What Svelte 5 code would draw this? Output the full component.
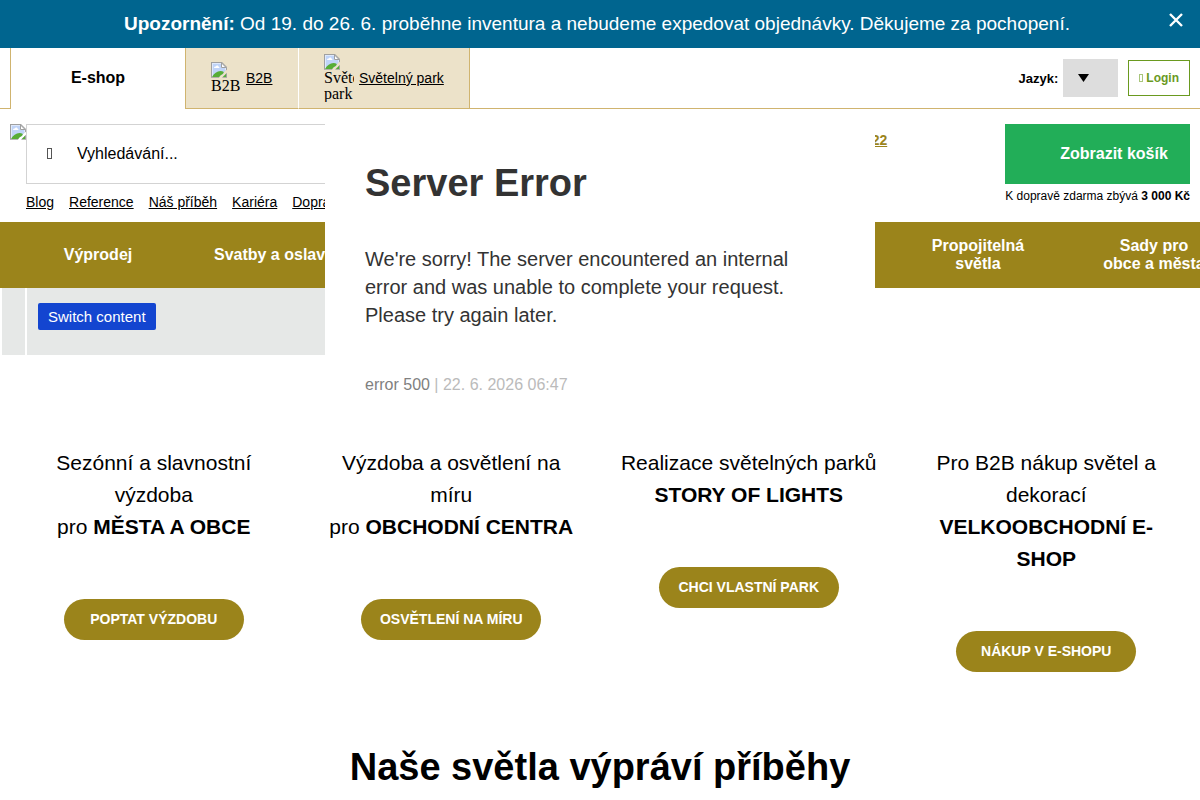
<script>
    // Top tabs with their own logo (shown as a missing picture with alt text)
    const partnerTabs = [
        { label: 'B2B', alt: 'B2B' },
        { label: 'Světelný park', alt: 'Světelný park' }
    ];

    const infoLinks = ['Blog', 'Reference', 'Náš příběh', 'Kariéra', 'Doprava a platba'];

    // \u00a0 keeps "obce a města" on one line
    const categories = [
        'Výprodej',
        'Svatby a oslavy',
        'Vánoční osvětlení',
        'Světelné řetězy',
        'Světelné dekorace',
        'Propojitelná světla',
        'Sady pro obce\u00a0a\u00a0města'
    ];

    const services = [
        { text: 'Sezónní a slavnostní výzdoba', prefix: 'pro ', strong: 'MĚSTA A OBCE', button: 'POPTAT VÝZDOBU' },
        { text: 'Výzdoba a osvětlení na míru', prefix: 'pro ', strong: 'OBCHODNÍ CENTRA', button: 'OSVĚTLENÍ NA MÍRU' },
        { text: 'Realizace světelných parků', prefix: '', strong: 'STORY OF LIGHTS', button: 'CHCI VLASTNÍ PARK' },
        { text: 'Pro B2B nákup světel a dekorací', prefix: '', strong: 'VELKOOBCHODNÍ E-SHOP', button: 'NÁKUP V E-SHOPU' }
    ];

    let noticeOpen = $state(true);
</script>

<!-- Missing picture icon, torn at the lower right corner -->
{#snippet brokenImage()}
    <svg class="broken" width="16" height="16" viewBox="0 0 16 16" aria-hidden="true">
        <g class="torn">
            <path d="M0 0H11L16 5V16H0Z" fill="#a0a0a0" />
            <path d="M1 1H10.5L15 5.5V15H1Z" fill="#dfe9fb" />
            <path d="M2 2H10V6H14V14H2Z" fill="#c0d4f8" />
            <path d="M3 6c0-1.2 1-1.8 1.8-1.5C5.2 3 7.5 3.2 7.6 4.8 8.6 4.8 8.8 6 8 6Z" fill="#fff" />
            <path d="M1 15C3 11.5 6 9 9.5 9 12 9 14 10.500 15 12V15Z" fill="#57ad36" />
            <path d="M10.5 1V5.5H15Z" fill="#fff" stroke="#a0a0a0" />
        </g>
    </svg>
{/snippet}

<div class="page">
    {#if noticeOpen}
        <div class="notice">
            <p><strong>Upozornění:</strong> Od 19. do 26. 6. proběhne inventura a nebudeme expedovat objednávky. Děkujeme za pochopení.</p>
            <button class="close" aria-label="Zavřít" onclick={() => (noticeOpen = false)}>
                <svg width="14" height="14" viewBox="0 0 14 14">
                    <path d="M1 1 13 13M13 1 1 13" stroke="#fff" stroke-width="2.4" />
                </svg>
            </button>
        </div>
    {/if}

    <!-- ===== TOP BAR ===== -->
    <div class="topbar">
        <div class="tabs">
            <strong class="tab-active">E-shop</strong>
            {#each partnerTabs as tab}
                <a href="#top" class="tab">
                    <span class="tab-logo">{@render brokenImage()}<span>{tab.alt}</span></span>
                    <span class="tab-label">{tab.label}</span>
                </a>
            {/each}
        </div>
        <div class="user">
            <label for="lang">Jazyk:</label>
            <div class="lang">
                <select id="lang"><option></option></select>
                <svg width="11" height="8" viewBox="0 0 11 8" aria-hidden="true"><path d="M0 0H11L5.5 8Z" /></svg>
            </div>
            <a href="#login" class="login"><span class="glyph small"></span>Login</a>
        </div>
    </div>

    <!-- ===== HEADER ===== -->
    <div class="below">
        <header class="header">
            <a href="#home" class="logo" aria-label="Domů">{@render brokenImage()}</a>
            <div class="header-main">
                <form class="search">
                    <span class="glyph"></span>
                    <input type="text" placeholder="Vyhledávání..." aria-label="Vyhledávání" />
                </form>
                <div class="info-links">
                    {#each infoLinks as link}
                        <a href="#info">{link}</a>
                    {/each}
                </div>
            </div>
            <a href="#phone" class="phone">777 722 722</a>
            <div class="cart">
                <a href="#cart" class="cart-button">Zobrazit košík</a>
                <p>K dopravě zdarma zbývá <strong>3 000 Kč</strong></p>
            </div>
        </header>

        <nav class="categories">
            {#each categories as category}
                <a href="#category"><span>{category}</span></a>
            {/each}
        </nav>

        <div class="slider">
            <div class="slider-edge"></div>
            <div class="slider-body">
                <button>Switch content</button>
            </div>
        </div>

        <!-- Server error box lies over the header -->
        <div class="error-box">
            <h1>Server Error</h1>
            <p>We're sorry! The server encountered an internal error and was unable to complete your request. Please try again later.</p>
            <p class="error-info"><span>error 500</span> | 22. 6. 2026 06:47</p>
        </div>
    </div>

    <!-- ===== SERVICES ===== -->
    <section class="services">
        {#each services as service}
            <div class="service">
                <p>{service.text}<br />{service.prefix}<strong>{service.strong}</strong></p>
                <a href="#service">{service.button}</a>
            </div>
        {/each}
    </section>

    <h2>Naše světla výpráví příběhy</h2>
</div>

<style>
    :global(body) {
        margin: 0;
        background: #fff;
    }

    .page {
        font-family: "Liberation Sans", Arial, sans-serif;
        font-size: 16px;
        color: #000;
        overflow: hidden;
    }

    .page :global(*) { box-sizing: border-box; }

    p, h1, h2 { margin: 0; }
    a { color: inherit; }

    /* ===== NOTICE ===== */
    .notice {
        display: flex;
        align-items: flex-start;
        background: #00658f;
        color: #fff;
    }

    .notice p {
        flex: 1;
        padding: 12px 0 12px 35px;
        font-size: 19px;
        line-height: 24px;
        text-align: center;
    }

    .close {
        padding: 13px 17px 13px 10px;
        border: 0;
        background: none;
        line-height: 0;
        cursor: pointer;
    }

    /* ===== TOP BAR ===== */
    .topbar {
        display: flex;
        justify-content: space-between;
        height: 61px;
        border-bottom: 1px solid #d0b46f;
        padding: 0 10px;
    }

    .tabs {
        display: flex;
        margin-bottom: -1px;
    }

    .tab-active {
        width: 175px;
        border-left: 1px solid #d0b46f;
        background: #fff;
        line-height: 60px;
        text-align: center;
    }

    .tab {
        display: flex;
        align-items: center;
        gap: 5px;
        min-width: 114px;
        padding: 0 25px;
        border: 1px solid #d0b46f;
        border-top: 0;
        background: #ece2c9;
        font-size: 14px;
    }

    .tab:nth-child(2) { border-right-color: #fff; }
    .tab:last-child { border-left: 0; }

    .tab-logo {
        display: block;
        width: 30px;
        overflow: hidden;
        font-family: "Liberation Serif", serif;
        font-size: 16px;
        line-height: 16px;
    }

    .tab-logo span { display: block; }
    .tab-label { text-decoration: underline; }
    .tab, .login { text-decoration: none; }

    .broken { display: block; }

    .torn {
        clip-path: polygon(0 0, 16px 0, 16px 8px, 13px 10px, 12px 12px, 9px 14px, 8px 16px, 11px 16px, 13px 14px, 16px 11px, 16px 16px, 0 16px);
    }

    /* Empty box that stands in for an icon font glyph */
    .glyph {
        width: 5px;
        height: 11px;
        margin: 0 25px 2px 20px;
        border: 1px solid #555;
    }

    .glyph.small {
        display: inline-block;
        width: 4px;
        height: 8px;
        margin: 0 3px 0 0;
        border-color: #a9c67c;
    }

    .user {
        display: flex;
        align-items: center;
    }

    .user label {
        margin-right: 5px;
        font-size: 13px;
        font-weight: bold;
    }

    .lang {
        position: relative;
        margin-right: 10px;
    }

    .lang select {
        display: block;
        width: 55px;
        height: 38px;
        border: 0;
        background: #ddd;
        appearance: none;
    }

    .lang svg {
        position: absolute;
        top: 15px;
        left: 15px;
        pointer-events: none;
    }

    .login {
        padding: 0 10px;
        border: 1px solid #6a9a1f;
        color: #6a9a1f;
        font-size: 12px;
        font-weight: bold;
        line-height: 34px;
    }

    /* ===== HEADER ===== */
    .below { position: relative; }

    .header {
        display: flex;
        padding: 15px 10px 0;
        height: 113px;
    }

    .header-main { width: 540px; }

    .search {
        display: flex;
        align-items: center;
        height: 60px;
        border: 1px solid #d3d3d3;
    }

    .search input {
        flex: 1;
        padding: 0;
        border: 0;
        outline: 0;
        font: inherit;
    }

    .search input::placeholder { color: #000; }

    .info-links {
        display: flex;
        gap: 15px;
        padding-top: 10px;
        font-size: 14px;
        line-height: 16px;
    }

    .phone {
        flex: 1;
        padding: 8px 118px 0 0;
        color: #9b841b;
        font-size: 14px;
        font-weight: bold;
        text-align: right;
    }

    .cart-button {
        display: block;
        padding-left: 55px;
        background: #22ae58;
        color: #fff;
        font-weight: bold;
        line-height: 60px;
        text-decoration: none;
    }

    .cart p {
        padding-top: 4px;
        font-size: 12px;
        line-height: 16px;
    }

    /* ===== CATEGORIES ===== */
    .categories {
        display: flex;
        height: 66px;
        padding-left: 10px;
        background: #9b841b;
    }

    .categories a {
        display: flex;
        flex: 0 0 176px;
        align-items: center;
        justify-content: center;
        padding: 0 25px;
        color: #fff;
        font-weight: bold;
        line-height: 18px;
        text-align: center;
        text-decoration: none;
    }

    .slider {
        display: flex;
        gap: 2px;
        height: 67px;
        padding-left: 2px;
    }

    .slider-edge {
        width: 23px;
        background: #e6e8e7;
    }

    .slider-body {
        width: 45%;
        padding: 15px 11px;
        background: #e6e8e7;
    }

    .slider-body button {
        display: block;
        padding: 0 10px;
        border: 0;
        border-radius: 2px;
        background: #1345d0;
        color: #fff;
        font-family: inherit;
        font-size: 15px;
        line-height: 27px;
    }

    /* ===== ERROR BOX ===== */
    .error-box {
        position: absolute;
        top: 0;
        left: 50%;
        width: 550px;
        margin-left: -275px;
        padding: 45px 40px 30px;
        background: #fff;
        color: #333;
    }

    .error-box h1 {
        font-size: 38px;
        line-height: 58px;
    }

    .error-box p {
        margin-top: 33px;
        font-size: 20px;
        line-height: 28px;
    }

    .error-box .error-info {
        margin-top: 42px;
        color: #bbb;
        font-size: 16px;
    }

    .error-info span { color: #808080; }

    /* ===== SERVICES ===== */
    .services {
        display: grid;
        grid-template-columns: repeat(4, 1fr);
        padding: 92px 5px 0;
    }

    .service {
        padding: 0 20px;
        text-align: center;
    }

    .service p {
        font-size: 21px;
        line-height: 32px;
    }

    .service a {
        display: block;
        width: 180px;
        margin: 56px auto 0;
        border-radius: 21px;
        background: #9b841b;
        color: #fff;
        font-size: 14px;
        font-weight: bold;
        line-height: 41px;
        text-decoration: none;
    }

    h2 {
        padding-top: 72px;
        font-size: 38px;
        line-height: 46px;
        text-align: center;
    }
</style>
